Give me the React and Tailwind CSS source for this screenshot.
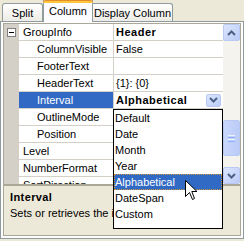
import React from "react";

const rows = [
  { name: "GroupInfo", value: "Header", bold: true, minus: true },
  { name: "ColumnVisible", value: "False", indent: true },
  { name: "FooterText", value: "", indent: true },
  { name: "HeaderText", value: "{1}: {0}", indent: true },
  { name: "Interval", value: "Alphabetical", bold: true, indent: true, selected: true, combo: true },
  { name: "OutlineMode", value: "", indent: true },
  { name: "Position", value: "", indent: true },
  { name: "Level", value: "" },
  { name: "NumberFormat", value: "" },
  { name: "SortDirection", value: "" },
];

const items = ["Default", "Date", "Month", "Year", "Alphabetical", "DateSpan", "Custom"];

function Chevron({ up }) {
  return (
    <svg width="9" height="6" viewBox="0 0 9 6" className="block">
      <path
        d={up ? "M1 5 L4.5 1.5 L8 5" : "M1 1 L4.5 4.5 L8 1"}
        fill="none"
        stroke="#4D6185"
        strokeWidth="2"
      />
    </svg>
  );
}

function ScrollBtn({ up }) {
  return (
    <div className="h-[17px] w-[17px] flex items-center justify-center rounded-[2px] border border-[#B9C9F3] bg-gradient-to-br from-[#DCE6FD] to-[#BACBF6]">
      <Chevron up={up} />
    </div>
  );
}

function Row({ r }) {
  return (
    <div className="flex h-[17px] shrink-0">
      <div className="w-[15px] h-[17px] bg-[#D4D0C8] flex items-center pl-[3px]">
        {r.minus && (
          <div className="w-[9px] h-[9px] border border-[#808080] bg-white flex items-center justify-center">
            <div className="w-[5px] h-px bg-black" />
          </div>
        )}
      </div>
      <div
        className={
          "w-[95px] h-[17px] border-b border-r border-[#D4D0C8] flex items-center whitespace-nowrap overflow-hidden " +
          (r.indent ? "pl-[18px] " : "pl-[4px] ") +
          (r.selected ? "bg-[#316AC5] text-white" : "bg-white text-black")
        }
      >
        {r.name}
      </div>
      <div className="flex-1 h-[17px] border-b border-[#D4D0C8] bg-white flex items-center justify-between pl-[2px] pr-[2px] whitespace-nowrap overflow-hidden">
        <span className={r.bold ? "font-bold tracking-[0.5px]" : ""}>{r.value}</span>
        {r.combo && (
          <div className="w-[15px] h-[13px] flex items-center justify-center rounded-[2px] border border-[#B9C9F3] bg-gradient-to-br from-[#DCE6FD] to-[#BACBF6]">
            <Chevron />
          </div>
        )}
      </div>
    </div>
  );
}

export default function App() {
  return (
    <div className="relative w-[244px] h-[241px] overflow-hidden bg-[#ECE9D8] text-[11px] leading-none text-black font-['Liberation_Sans',Arial,sans-serif]">
      {/* tabs */}
      <div className="flex h-[21px] items-end pl-[2px]">
        <div className="w-[41px] h-[18px] border border-b-0 border-[#919B9C] rounded-t-[3px] bg-gradient-to-b from-white to-[#ECEBE6] flex items-center justify-center pt-[1px]">
          Split
        </div>
        <div className="relative z-10 -mb-px w-[50px] h-[22px] border-x border-[#919B9C] bg-[#FCFCFE] flex flex-col">
          <div className="h-[3px] -mx-px rounded-t-[3px] border-t border-[#E68B2C] bg-[#FFC73C]" />
          <div className="flex-1 flex items-center justify-center pb-[3px]">Column</div>
        </div>
        <div className="w-[80px] h-[18px] border border-b-0 border-l-0 border-[#919B9C] rounded-tr-[3px] bg-gradient-to-b from-white to-[#ECEBE6] flex items-center justify-center pt-[1px]">
          Display Column
        </div>
      </div>

      {/* tab page */}
      <div className="w-[244px] h-[218px] border border-[#919B9C] bg-[#FCFCFE] pt-[1px] px-[2px] flex flex-col">
        {/* grid view */}
        <div className="h-[162px] border border-[#ACA899] flex bg-white">
          <div className="flex-1 flex flex-col overflow-hidden">
            {rows.map((r) => (
              <Row key={r.name} r={r} />
            ))}
          </div>
          <div className="w-[17px] h-[160px] flex flex-col bg-[#F4F3EE]">
            <ScrollBtn up />
            <div className="h-[79px]" />
            <div className="h-[36px] w-[17px] rounded-[2px] border border-[#B9C9F3] bg-gradient-to-r from-[#C9D8FC] to-[#BACBF6] flex flex-col items-center justify-center gap-px">
              <div className="w-[7px] h-px bg-[#EEF4FE]" />
              <div className="w-[7px] h-px bg-[#8CB0F8]" />
              <div className="w-[7px] h-px bg-[#EEF4FE]" />
              <div className="w-[7px] h-px bg-[#8CB0F8]" />
            </div>
            <div className="h-[11px]" />
            <ScrollBtn />
          </div>
        </div>
        {/* description */}
        <div className="h-[51px] border border-[#ACA899] bg-[#ECE9D8] px-[6px] pt-[5px] overflow-hidden">
          <div className="font-bold tracking-[0.4px] h-[13px] flex items-center">Interval</div>
          <div className="mt-[3px] h-[13px] flex items-center whitespace-nowrap">Sets or retrieves the interval.</div>
        </div>
      </div>

      {/* dropdown list */}
      <div className="absolute left-[113px] top-[109px] w-[110px] h-[120px] border border-black bg-white">
        {items.map((it) => (
          <div
            key={it}
            className={
              "h-[16px] pl-[1px] flex items-center " +
              (it === "Alphabetical"
                ? "bg-[#316AC5] text-white outline-1 outline-dotted outline-[#CE9539] -outline-offset-1"
                : "")
            }
          >
            {it}
          </div>
        ))}
      </div>

      {/* mouse cursor */}
      <svg className="absolute left-[185px] top-[180px]" width="13" height="21" viewBox="0 0 13 21">
        <path
          d="M0.5 0.5 L0.5 16.5 L4.5 12.5 L7.5 19.5 L9.5 18.5 L6.8 11.5 L12 11.5 Z"
          fill="white"
          stroke="black"
          strokeWidth="1"
          strokeLinejoin="miter"
        />
      </svg>
    </div>
  );
}
